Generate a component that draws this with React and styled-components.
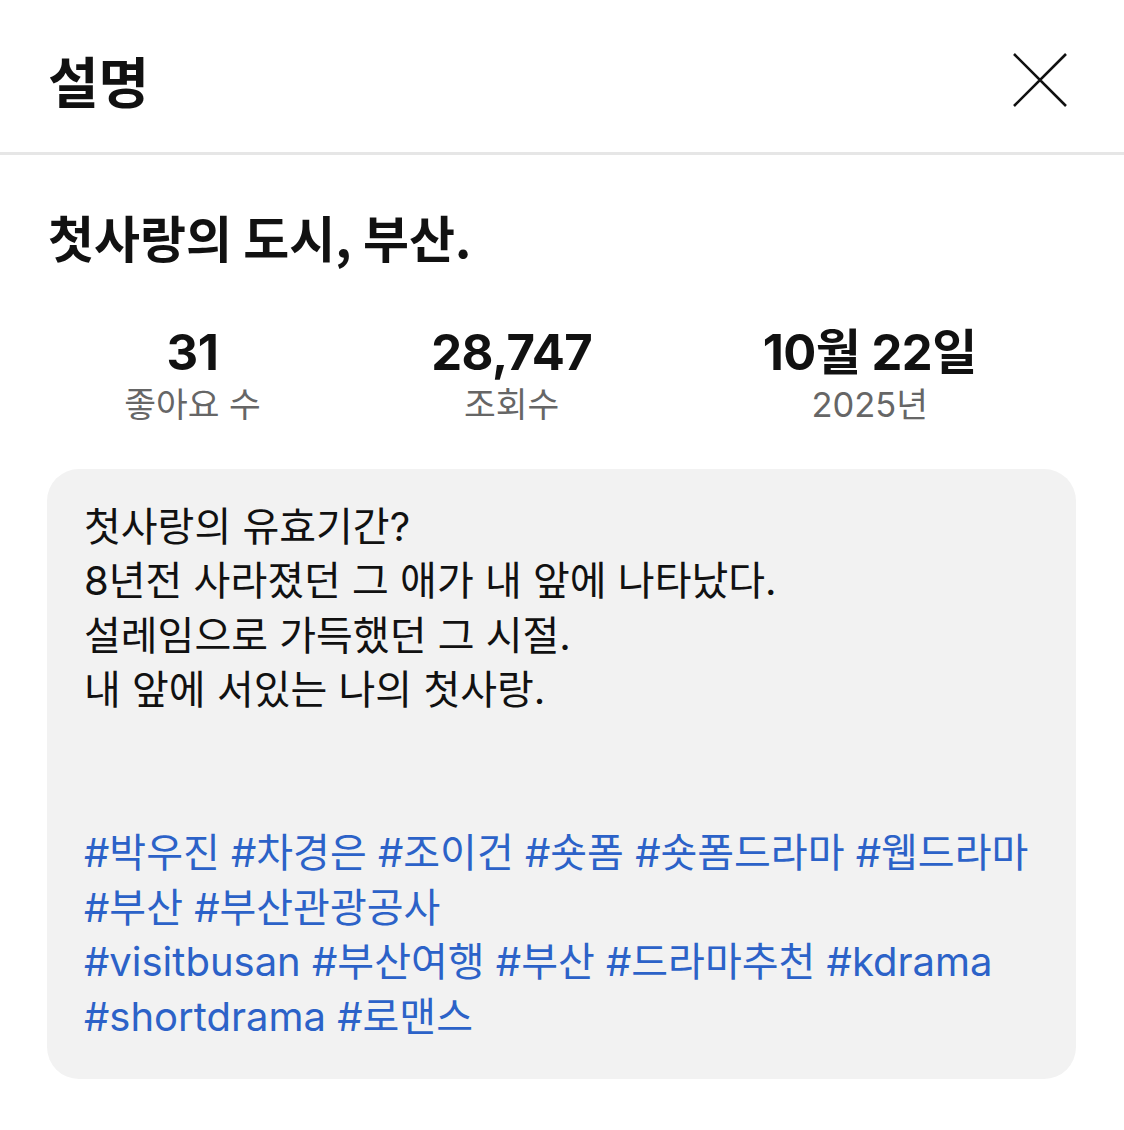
import React from "react";
import styled, { createGlobalStyle } from "styled-components";

const Global = createGlobalStyle`
  html, body { margin: 0; padding: 0; background: #ffffff; }
  body { font-family: Inter, "Noto Sans CJK KR", sans-serif; color: #111111; }
`;

const Page = styled.div`
  width: 1124px;
  display: flex;
  flex-direction: column;
  background: #fff;
`;

const Header = styled.header`
  box-sizing: border-box;
  height: 155px;
  display: flex;
  align-items: center;
  justify-content: space-between;
  padding: 7px 57px 0 48px;
  border-bottom: 3px solid #e6e6e6;
`;

const HeaderTitle = styled.h1`
  margin: 0;
  font-size: 55px;
  font-weight: 700;
  line-height: 1;
  color: #111;
  font-family: "Noto Sans CJK KR", sans-serif;
`;

const CloseButton = styled.button`
  border: 0;
  padding: 0;
  background: transparent;
  width: 54px;
  height: 54px;
  display: flex;
  align-items: center;
  justify-content: center;
  cursor: pointer;
`;

const Title = styled.h2`
  margin: 51px 48px 0;
  font-size: 50px;
  line-height: 60px;
  font-weight: 700;
  color: #111;
  font-family: "Noto Sans CJK KR", sans-serif;
`;

const Stats = styled.div`
  display: flex;
  justify-content: space-around;
  margin: 59px 62px 0 39px;
`;

const Stat = styled.div`
  display: flex;
  flex-direction: column;
  align-items: center;
`;

const StatValue = styled.div`
  font-size: 49px;
  line-height: 56px;
  font-weight: 700;
  letter-spacing: -0.5px;
  color: #111;
`;

const StatLabel = styled.div`
  margin-top: 2px;
  font-size: 34.5px;
  line-height: 44px;
  color: #666;
`;

const Card = styled.div`
  margin: 42px 48px 40px 47px;
  padding: 31px 30px 35px 37px;
  background: #f2f2f2;
  border-radius: 32px;
  font-size: 40px;
  line-height: 54.4px;
  color: #111;
  white-space: pre-line;
`;

const Tags = styled.div`
  color: #2c62c8;
`;

const Tag = styled.span``;

const description = `첫사랑의 유효기간?
8년전 사라졌던 그 애가 내 앞에 나타났다.
설레임으로 가득했던 그 시절.
내 앞에 서있는 나의 첫사랑.


`;

const tagLines = [
  ["#박우진", "#차경은", "#조이건", "#숏폼", "#숏폼드라마", "#웹드라마"],
  ["#부산", "#부산관광공사"],
  ["#visitbusan", "#부산여행", "#부산", "#드라마추천", "#kdrama"],
  ["#shortdrama", "#로맨스"],
];

export default function App() {
  return (
    <Page>
      <Global />
      <Header>
        <HeaderTitle>설명</HeaderTitle>
        <CloseButton aria-label="닫기">
          <svg width="54" height="54" viewBox="0 0 54 54" fill="none">
            <path d="M1 1 L53 53 M53 1 L1 53" stroke="#111" strokeWidth="2.6" />
          </svg>
        </CloseButton>
      </Header>
      <Title>첫사랑의 도시, 부산.</Title>
      <Stats>
        <Stat>
          <StatValue>31</StatValue>
          <StatLabel>좋아요 수</StatLabel>
        </Stat>
        <Stat>
          <StatValue>28,747</StatValue>
          <StatLabel>조회수</StatLabel>
        </Stat>
        <Stat>
          <StatValue>10월 22일</StatValue>
          <StatLabel>2025년</StatLabel>
        </Stat>
      </Stats>
      <Card>
        {description}
        <Tags>
          {tagLines.map((line, i) => (
            <div key={i}>
              {line.map((t, j) => (
                <React.Fragment key={j}>
                  {j > 0 && " "}
                  <Tag>{t}</Tag>
                </React.Fragment>
              ))}
            </div>
          ))}
        </Tags>
      </Card>
    </Page>
  );
}
